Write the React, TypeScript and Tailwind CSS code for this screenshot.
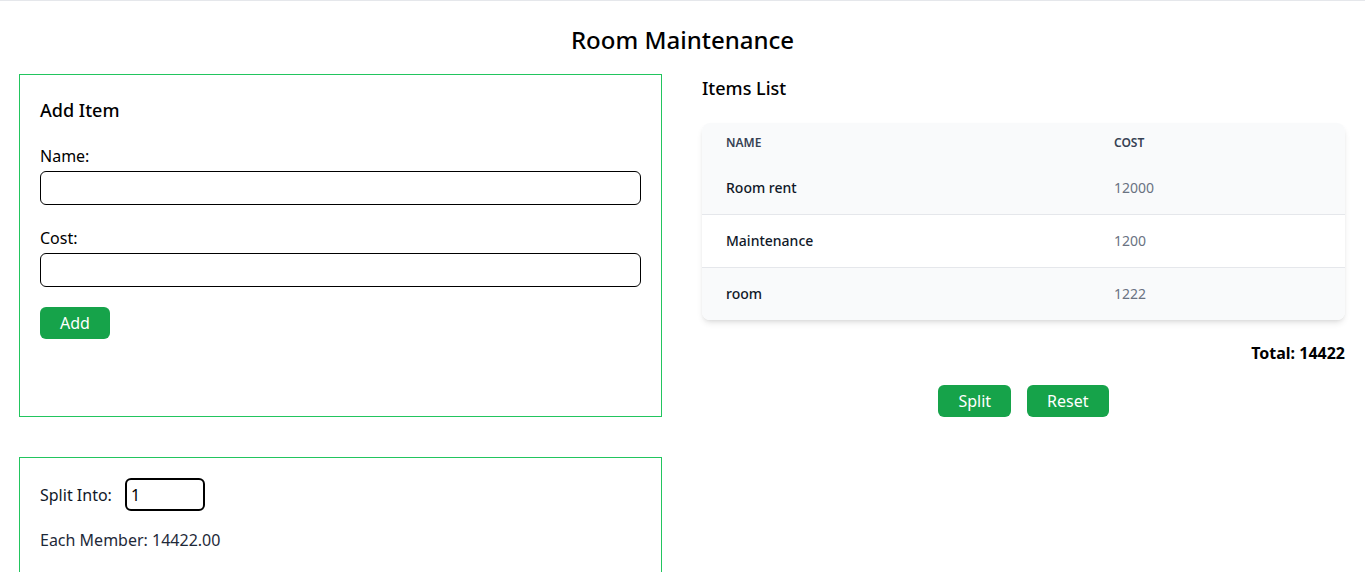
import React, { useState } from 'react';

interface Item {
    name: string;
    cost: number;
}

const initialItems: Item[] = [
    { name: 'Room rent', cost: 12000 },
    { name: 'Maintenance', cost: 1200 },
    { name: 'room', cost: 1222 },
];

export default function App() {
    const [items, setItems] = useState<Item[]>(initialItems);
    const [name, setName] = useState('');
    const [cost, setCost] = useState('');
    const [members, setMembers] = useState('1');

    const total = items.reduce((acc, curr) => acc + curr.cost, 0);
    const count = Number(members) || 1;

    const handleAdd = () => {
        if (!name || !cost) return;
        setItems([...items, { name, cost: Number(cost) }]);
        setName('');
        setCost('');
    };

    return (
        <div className="min-h-screen bg-white border-t border-gray-200 text-black font-['Noto_Sans','Open_Sans',sans-serif]">
            <h1 className="pt-[23px] mb-[18px] text-center text-2xl leading-8 font-medium">Room Maintenance</h1>

            <div className="pl-[19px] pr-5 grid grid-cols-2 gap-10">
                {/* Add item form */}
                <div className="border border-[#22c55e] p-5 pt-[21px]">
                    <h2 className="text-lg leading-7 font-medium mb-5">Add Item</h2>
                    <label className="block text-base leading-6 mb-[3px]">Name:</label>
                    <input
                        value={name}
                        onChange={(e) => setName(e.target.value)}
                        className="block w-full h-[34px] border border-black rounded-md px-2 mb-[21px]"
                    />
                    <label className="block text-base leading-6 mb-[3px]">Cost:</label>
                    <input
                        value={cost}
                        onChange={(e) => setCost(e.target.value)}
                        className="block w-full h-[34px] border border-black rounded-md px-2 mb-5"
                    />
                    <button
                        onClick={handleAdd}
                        className="h-8 px-5 bg-[#16a34a] text-white rounded-md text-base"
                    >
                        Add
                    </button>
                </div>

                {/* Items list */}
                <div>
                    <h2 className="text-lg leading-7 font-medium mb-[21px]">Items List</h2>
                    <div className="rounded-lg shadow-md overflow-hidden">
                        <table className="w-full text-left">
                            <thead className="bg-gray-50">
                                <tr>
                                    <th className="w-[388px] px-6 pt-3 pb-[11px] text-xs leading-4 font-semibold uppercase text-gray-700">Name</th>
                                    <th className="px-6 pt-3 pb-[11px] text-xs leading-4 font-semibold uppercase text-gray-700">Cost</th>
                                </tr>
                            </thead>
                            <tbody>
                                {items.map((item, i) => (
                                    <tr key={i} className={`${i % 2 === 0 ? 'bg-gray-50' : 'bg-white'} ${i < items.length - 1 ? 'border-b border-gray-200' : ''}`}>
                                        <td className="px-6 py-4 text-sm leading-5 font-medium text-gray-900">{item.name}</td>
                                        <td className="px-6 py-4 text-sm leading-5 text-gray-500">{item.cost}</td>
                                    </tr>
                                ))}
                            </tbody>
                        </table>
                    </div>
                    <div className="mt-[21px] text-right font-bold text-base leading-6">Total: {total}</div>
                    <div className="mt-5 flex justify-center gap-4">
                        <button className="h-8 px-5 bg-[#16a34a] text-white rounded-md text-base">Split</button>
                        <button
                            onClick={() => setItems([])}
                            className="h-8 px-5 bg-[#16a34a] text-white rounded-md text-base"
                        >
                            Reset
                        </button>
                    </div>
                </div>

                {/* Split */}
                <div className="border border-[#22c55e] px-5 pt-5 pb-6">
                    <div className="flex items-center">
                        <label className="text-base leading-6 text-gray-900">Split Into:</label>
                        <input
                            value={members}
                            onChange={(e) => setMembers(e.target.value)}
                            className="ml-[13px] w-20 h-[33px] border-2 border-black rounded-md px-1 text-base"
                        />
                    </div>
                    <p className="mt-[17px] text-base leading-6 text-gray-800">Each Member: {(total / count).toFixed(2)}</p>
                </div>
            </div>
        </div>
    );
}
